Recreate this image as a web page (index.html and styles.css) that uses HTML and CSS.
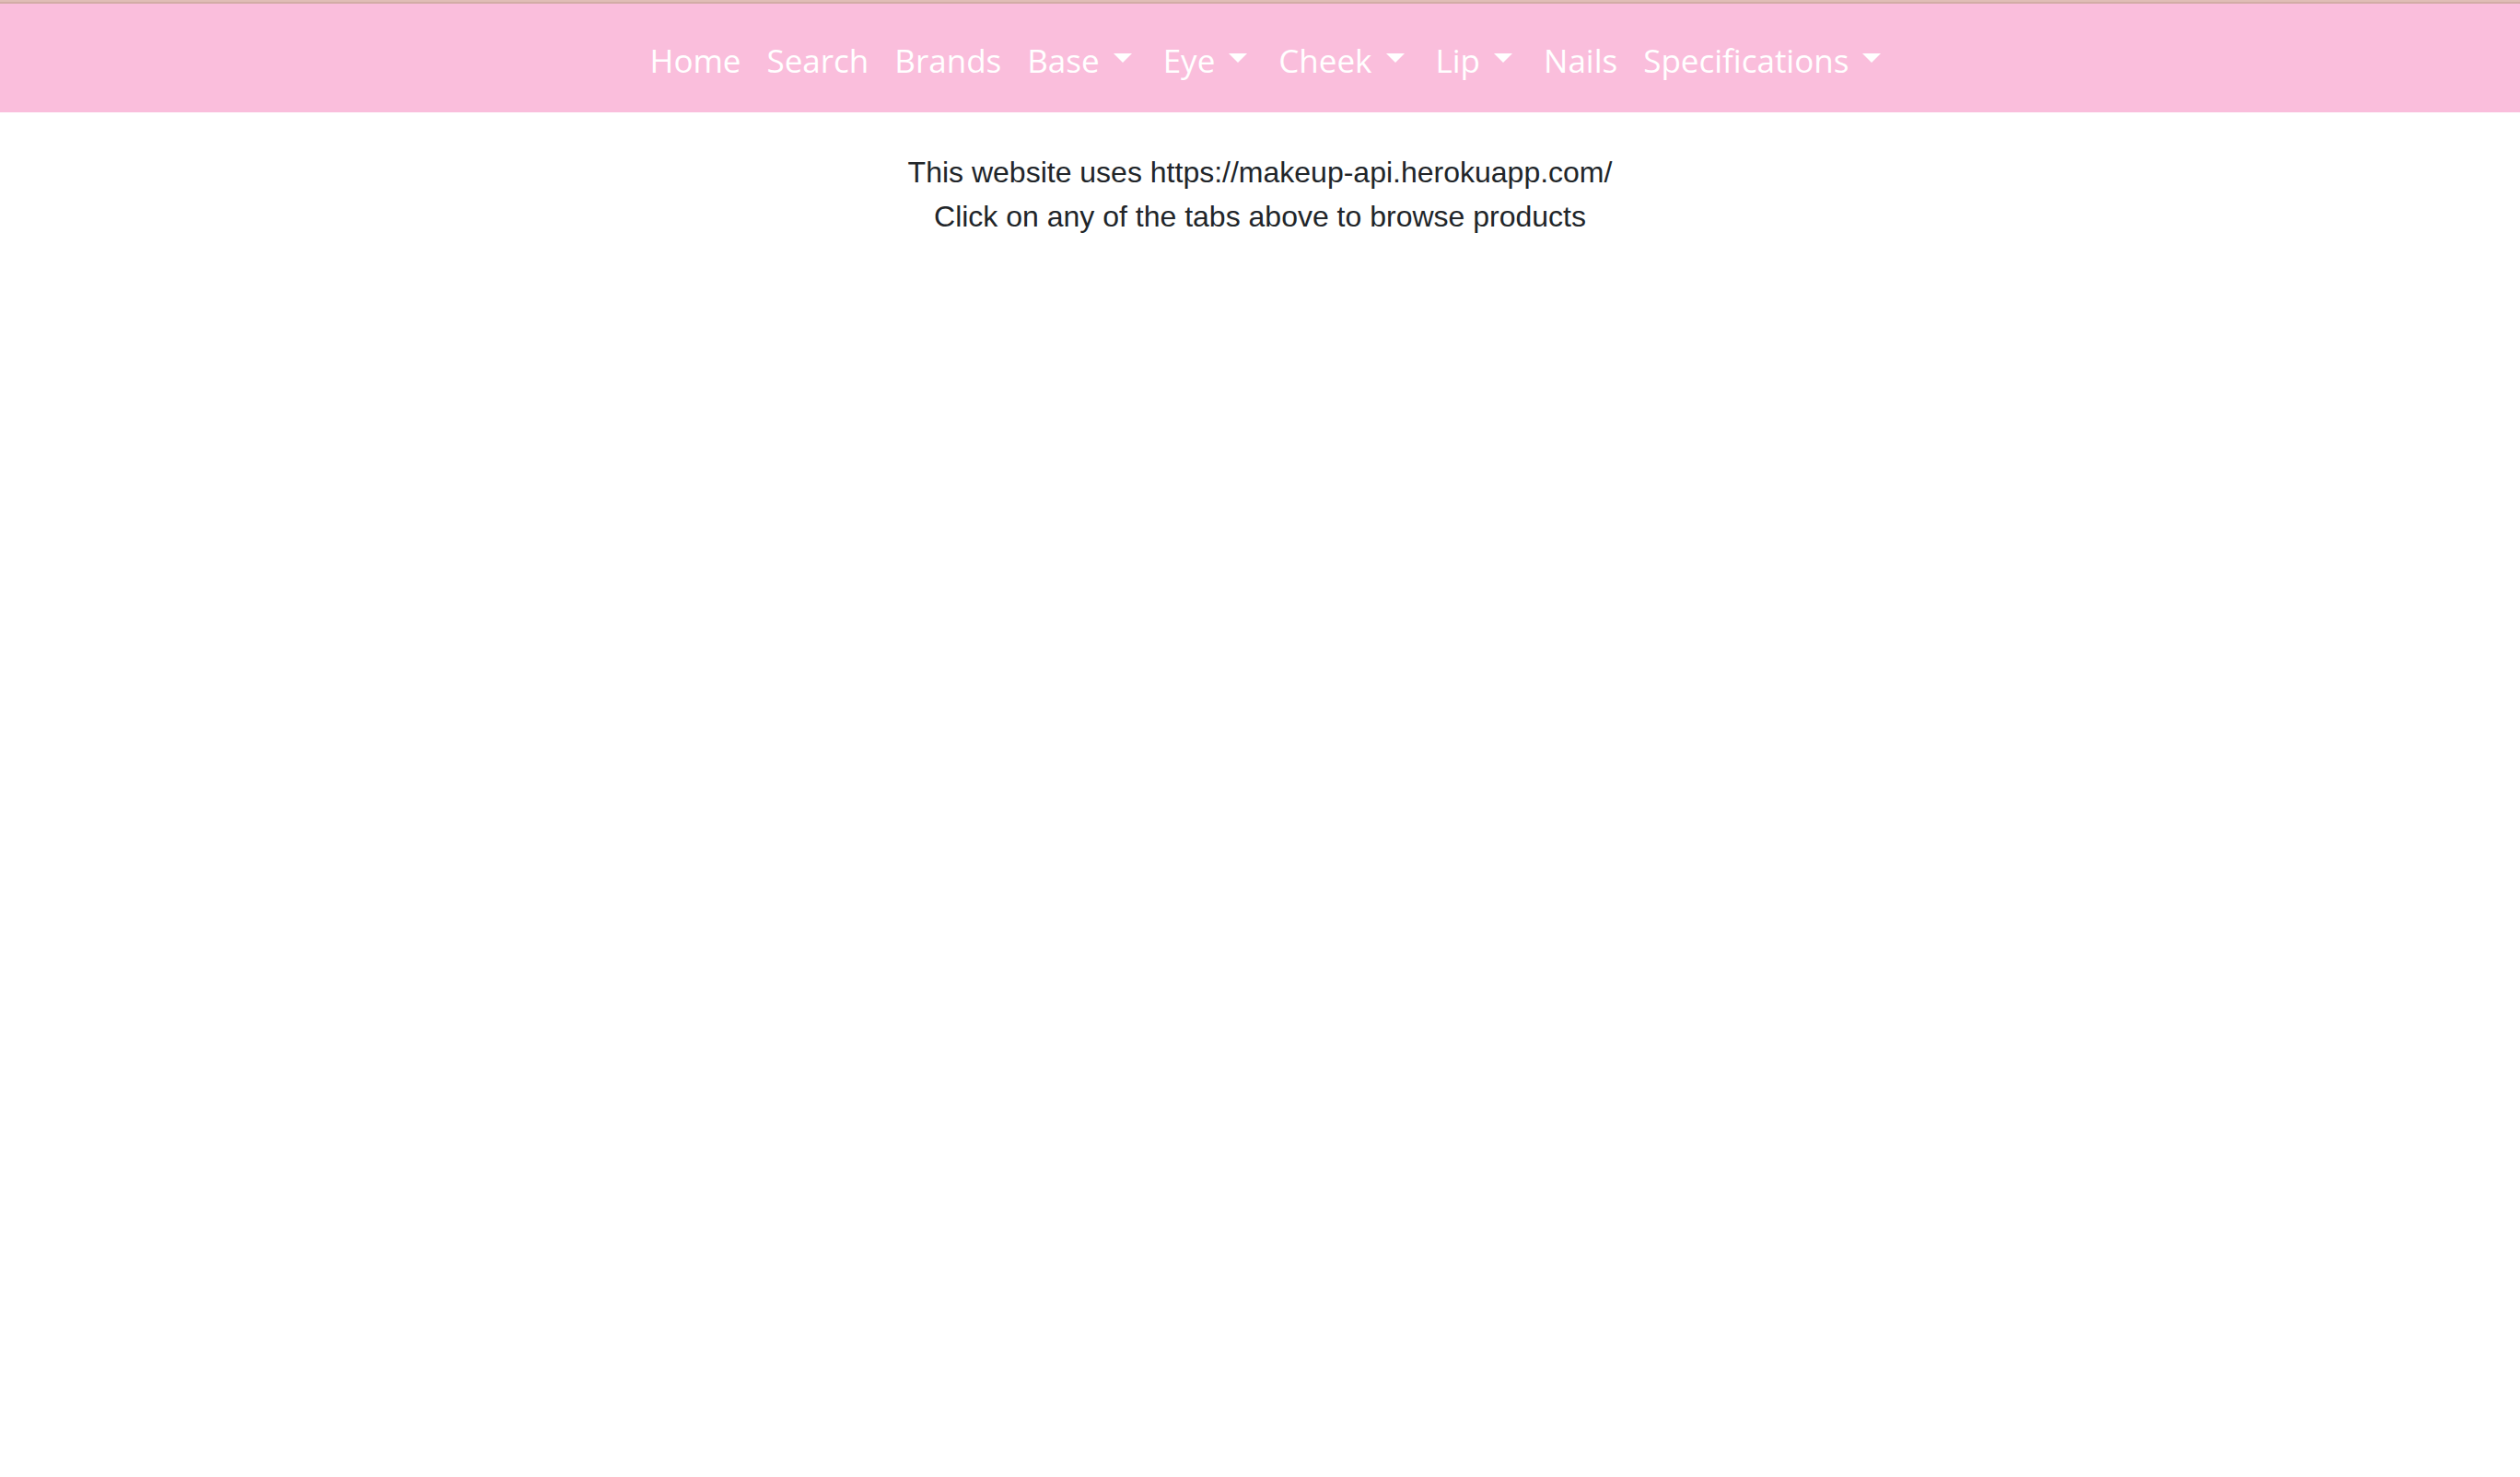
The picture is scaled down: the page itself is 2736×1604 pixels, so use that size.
FILE: index.html
```html
<!DOCTYPE html>
<html lang="en">
<head>
<meta charset="utf-8">
<title>Makeup</title>
<link rel="stylesheet" href="styles.css">
</head>
<body>
<nav class="navbar">
  <ul class="nav">
    <li><a class="nav-link" href="#">Home</a></li>
    <li><a class="nav-link" href="#">Search</a></li>
    <li><a class="nav-link" href="#">Brands</a></li>
    <li><a class="nav-link dropdown" href="#">Base<span class="caret"></span></a></li>
    <li><a class="nav-link dropdown" href="#">Eye<span class="caret"></span></a></li>
    <li><a class="nav-link dropdown" href="#">Cheek<span class="caret"></span></a></li>
    <li><a class="nav-link dropdown" href="#">Lip<span class="caret"></span></a></li>
    <li><a class="nav-link" href="#">Nails</a></li>
    <li><a class="nav-link dropdown" href="#">Specifications<span class="caret"></span></a></li>
  </ul>
</nav>
<main class="intro">
  <p class="line">This website uses https://makeup-api.herokuapp.com/</p>
  <p class="line">Click on any of the tabs above to browse products</p>
</main>
</body>
</html>
```
FILE: styles.css
```css
html, body {
  margin: 0;
  padding: 0;
  background: #ffffff;
}
body {
  font-family: "Liberation Sans", Arial, sans-serif;
  color: #212529;
}
.navbar {
  box-sizing: border-box;
  height: 122px;
  padding-top: 8px;
  border-top: 2px solid #e0bdb6;
  box-shadow: inset 0 2px 0 #d2aca6;
  background: #fabedc;
  display: flex;
  align-items: center;
  justify-content: center;
}
.nav {
  list-style: none;
  margin: 0;
  padding: 0 0 0 18px;
  display: flex;
  align-items: center;
}
.nav-link {
  display: flex;
  align-items: center;
  padding: 0 14px;
  color: #ffffff;
  text-decoration: none;
  font-family: "Open Sans", "Noto Sans", sans-serif;
  font-size: 35px;
  line-height: 50px;
}
.caret {
  display: inline-block;
  width: 0;
  height: 0;
  margin-left: 15px;
  margin-right: 6px;
  margin-top: -7px;
  border-top: 10px solid #ffffff;
  border-left: 10px solid transparent;
  border-right: 10px solid transparent;
}
.intro {
  padding-top: 41px;
  text-align: center;
}
.line {
  margin: 0;
  font-size: 32px;
  line-height: 48px;
}
```
